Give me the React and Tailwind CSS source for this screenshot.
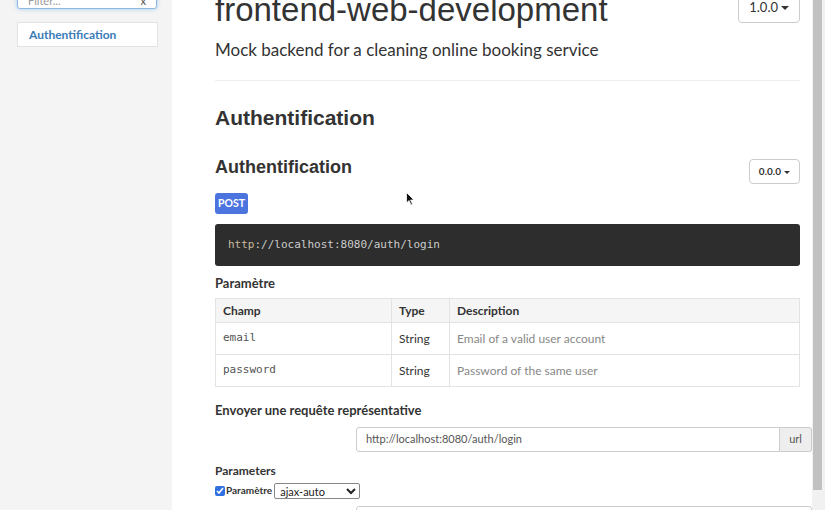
import React from "react";

const sans = { fontFamily: "Lato, 'Open Sans', sans-serif" };
const arial = { fontFamily: "'Liberation Sans', Arial, sans-serif" };
const mono = { fontFamily: "'DejaVu Sans Mono', monospace" };

export default function App() {
  return (
    <div className="flex h-[510px] w-[825px] overflow-hidden bg-white text-[#333]" style={sans}>
      {/* Sidebar */}
      <div className="w-[172px] shrink-0 bg-[#f4f4f4] pl-[17px] pr-[14px]">
        <div className="-mt-[16px] mr-[1px] flex h-[25px] items-end justify-between rounded-[3px] border border-[#8fb8e0] bg-white px-[10px] pb-[2px] shadow-[0_0_4px_rgba(102,175,233,0.6)]">
          <span className="text-[11px] leading-[11px] text-[#999]">Filter...</span>
          <span className="text-[11px] leading-[11px] text-[#555]">x</span>
        </div>
        <div className="mt-[13px] flex h-[25px] items-center border border-[#e3e3e3] bg-white px-[11px] text-[12px] font-bold text-[#3a7bb8]">
          Authentification
        </div>
      </div>

      {/* Main */}
      <div className="relative min-w-0 flex-1 pl-[43px] pr-[12px]">
        <div className="-mt-[10px] flex items-start justify-between">
          <div className="text-[33px] leading-[40px] text-[#333]" style={arial}>
            frontend-web-development
          </div>
          <button className="mt-[2px] flex h-[31px] items-center gap-[3px] rounded-[4px] border border-[#ccc] bg-white px-[10px] text-[13px] text-[#333]">
            1.0.0
            <span className="mt-[1px] border-x-[4px] border-t-[4px] border-x-transparent border-t-[#333]"></span>
          </button>
        </div>
        <div className="mt-[8px] text-[17px] leading-[24px] text-[#333]">
          Mock backend for a cleaning online booking service
        </div>
        <div className="mt-[18px] border-t border-[#eee]"></div>

        <div className="mt-[22px] text-[21px] font-bold leading-[30px] text-[#333]" style={arial}>
          Authentification
        </div>

        <div className="mt-[22px] flex items-start justify-between">
          <div className="text-[18px] font-bold leading-[24px] text-[#333]" style={arial}>
            Authentification
          </div>
          <button className="mt-[4px] flex h-[25px] items-center gap-[3px] rounded-[4px] border border-[#ccc] bg-white pl-[9px] pr-[9px] text-[10px] font-bold text-[#333]">
            0.0.0
            <span className="mt-[1px] border-x-[3px] border-t-[3px] border-x-transparent border-t-[#333]"></span>
          </button>
        </div>

        <div className="mt-[9px] inline-flex h-[21px] items-center rounded-[3px] bg-[#4b74df] px-[3px] text-[10.5px] font-bold text-white">
          POST
        </div>

        <div className="mt-[10px] flex h-[42px] items-center rounded-[3px] bg-[#2d2d2d] px-[13px] text-[11px] text-[#ccc]" style={mono}>
          <span className="text-[#c8b99c]">http</span>://localhost:8080/auth/login
        </div>

        <div className="mt-[9px] text-[13px] font-bold leading-[16px]">Paramètre</div>

        <table className="mt-[7px] w-full border-collapse text-[12px]">
          <thead>
            <tr className="h-[24px] bg-[#f5f5f5]">
              <th className="w-[176px] border border-[#e3e3e3] px-[7px] text-left font-bold">Champ</th>
              <th className="w-[58px] border border-[#e3e3e3] px-[7px] text-left font-bold">Type</th>
              <th className="border border-[#e3e3e3] px-[7px] text-left font-bold">Description</th>
            </tr>
          </thead>
          <tbody>
            <tr className="h-[32px]">
              <td className="border border-[#e3e3e3] px-[7px] text-[11px] text-[#555]" style={mono}>email</td>
              <td className="border border-[#e3e3e3] px-[7px] text-[#333]">String</td>
              <td className="border border-[#e3e3e3] px-[7px] text-[#888]">Email of a valid user account</td>
            </tr>
            <tr className="h-[32px]">
              <td className="border border-[#e3e3e3] px-[7px] text-[11px] text-[#555]" style={mono}>password</td>
              <td className="border border-[#e3e3e3] px-[7px] text-[#333]">String</td>
              <td className="border border-[#e3e3e3] px-[7px] text-[#888]">Password of the same user</td>
            </tr>
          </tbody>
        </table>

        <div className="mt-[15px] text-[13px] font-bold leading-[16px]">Envoyer une requête représentative</div>

        <div className="-mr-[12px] mt-[9px] flex h-[25px] pl-[141px]">
          <div className="flex flex-1 items-center rounded-l-[3px] border border-[#ccc] bg-white px-[9px] text-[11px] text-[#555]">
            http://localhost:8080/auth/login
          </div>
          <div className="flex w-[32px] items-center justify-center rounded-r-[3px] border border-l-0 border-[#ccc] bg-[#eee] text-[11px] text-[#555]">
            url
          </div>
        </div>

        <div className="mt-[11px] text-[12px] font-bold leading-[15px]">Parameters</div>
        <div className="mt-[4px] flex h-[17px] items-center text-[10px] font-bold">
          <input type="checkbox" defaultChecked className="m-0 h-[10px] w-[10px] accent-[#2f6fe0]" />
          <span className="ml-[1px]">Paramètre</span>
          <select className="ml-[2px] h-[16px] w-[86px] rounded-[2px] border border-[#888] bg-white px-[1px] text-[11px] font-normal text-[#222]">
            <option>ajax-auto</option>
          </select>
        </div>
        <div className="-mr-[12px] ml-[141px] mt-[7px] h-[10px] rounded-t-[3px] border border-[#ccc]"></div>

        {/* mouse cursor */}
        <svg className="absolute left-[234px] top-[192px]" width="9" height="14" viewBox="0 0 9 14">
          <path d="M0.5 0.5 L0.5 11 L3 8.5 L5 13 L6.5 12.3 L4.6 8 L8 8 Z" fill="#111" stroke="#fff" strokeWidth="0.8" />
        </svg>
      </div>

      {/* Scrollbar */}
      <div className="w-[13px] shrink-0 bg-[#f1f1f1] pl-[1px] pr-[3px]">
        <div className="h-[490px] bg-[#c1c1c1]"></div>
      </div>
    </div>
  );
}
